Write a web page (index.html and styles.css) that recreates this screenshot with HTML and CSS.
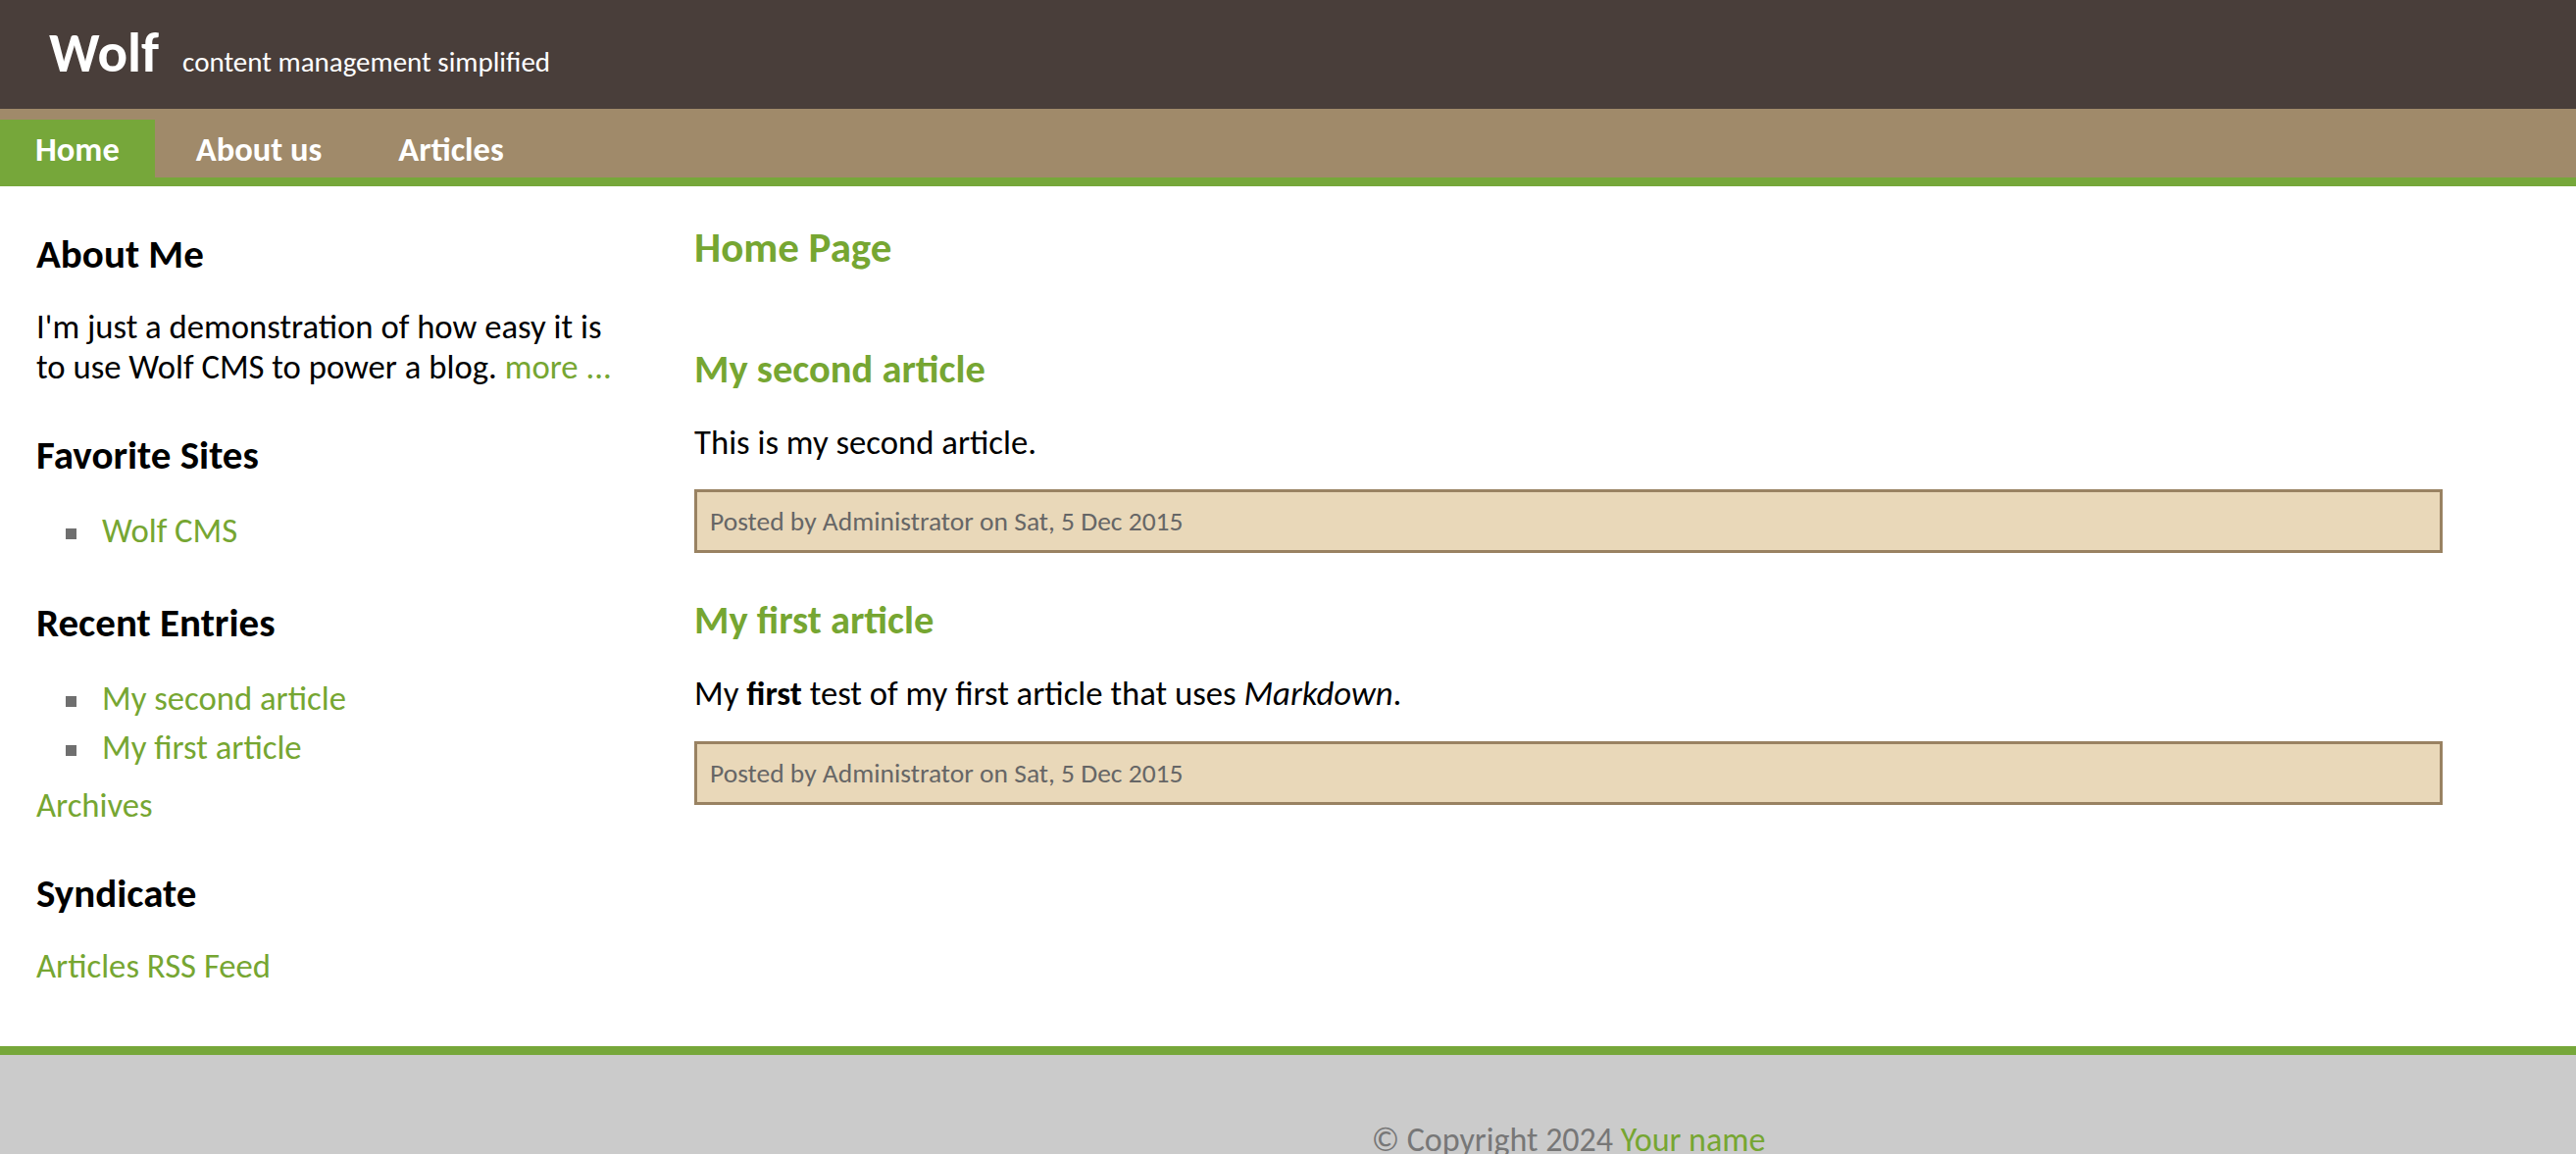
FILE: index.html
```html
<!DOCTYPE html>
<html>
<head>
  <meta charset="utf-8">
  <title>Wolf - Home Page</title>
  <link rel="stylesheet" href="styles.css">
</head>
<body>

  <header class="header">
    <h1 class="logo">Wolf</h1>
    <span class="slogan">content management simplified</span>
  </header>

  <nav class="nav">
    <a href="#" class="nav-item current">Home</a>
    <a href="#" class="nav-item">About us</a>
    <a href="#" class="nav-item">Articles</a>
  </nav>

  <div class="page">

    <div class="sidebar">
      <h3>About Me</h3>
      <p>I'm just a demonstration of how easy it is to use Wolf CMS to power a blog. <a href="#">more ...</a></p>

      <h3>Favorite Sites</h3>
      <ul>
        <li><a href="#">Wolf CMS</a></li>
      </ul>

      <h3>Recent Entries</h3>
      <ul>
        <li><a href="#">My second article</a></li>
        <li><a href="#">My first article</a></li>
      </ul>
      <p class="archives"><a href="#">Archives</a></p>

      <h3>Syndicate</h3>
      <p><a href="#">Articles RSS Feed</a></p>
    </div>

    <div class="content">
      <h2>Home Page</h2>

      <div class="entry">
        <h3><a href="#">My second article</a></h3>
        <p>This is my second article.</p>
        <p class="info">Posted by Administrator on Sat, 5 Dec 2015</p>
      </div>

      <div class="entry">
        <h3><a href="#">My first article</a></h3>
        <p>My <strong>first</strong> test of my first article that uses <em>Markdown</em>.</p>
        <p class="info">Posted by Administrator on Sat, 5 Dec 2015</p>
      </div>
    </div>

  </div>

  <footer class="footer">
    <p>&copy; Copyright 2024 <a href="#">Your name</a></p>
  </footer>

</body>
</html>
```

FILE: styles.css
```css
body {
  margin: 0;
  font-family: Carlito, Calibri, Lato, sans-serif;
  font-size: 34.7px;
  line-height: 41px;
  color: #000;
  background: #fff;
}

a {
  color: #76a632;
  text-decoration: none;
}

/* header */

.header {
  display: flex;
  align-items: baseline;
  box-sizing: border-box;
  height: 111px;
  padding: 25px 50px 0;
  background-color: #493e3a;
  color: #fff;
}

.logo {
  margin: 0 24px 0 0;
  font-size: 57px;
  line-height: 1;
  font-weight: bold;
}

.slogan {
  font-size: 29px;
}

/* navigation */

.nav {
  display: flex;
  gap: 6px;
  padding-top: 11px;
  background-color: #a08a6a;
  border-bottom: 9px solid #76a73a;
}

.nav-item {
  padding: 0 36px;
  font-size: 34.5px;
  line-height: 61px;
  height: 59px;
  font-weight: bold;
  color: #fff;
}

.nav-item.current {
  background-color: #76a73a;
}

/* columns */

.page {
  display: flex;
  padding: 0 136px 61px 37px;
}

.sidebar {
  flex: none;
  width: 595px;
}

.sidebar h3 {
  margin: 45px 0 29px;
  font-size: 41px;
  line-height: 49px;
}

.sidebar p {
  margin: 0;
}

.sidebar ul {
  margin: 0;
  padding: 3px 0 4px 67px;
  list-style: none;
}

.sidebar li + li {
  margin-top: 9px;
}

.sidebar li::before {
  content: "";
  display: inline-block;
  width: 11px;
  height: 11px;
  margin: 0 26px 0 -37px;
  background-color: #6f6f6f;
  vertical-align: middle;
}

.sidebar .archives {
  margin-top: 14px;
}

.content {
  flex: 1;
  margin-left: 76px;
}

.content h2 {
  margin: 37.5px 0 74px;
  font-size: 43px;
  line-height: 50px;
  color: #76a632;
}

.entry {
  margin-top: 44px;
}

.entry h3 {
  margin: 0 0 31px;
  font-size: 40.5px;
  line-height: 48px;
}

.entry p {
  margin: 0 0 27.5px;
}

.entry .info {
  margin: 0;
  padding: 13px 13px;
  font-size: 27.5px;
  line-height: 33px;
  color: #666;
  background-color: #e9d8b9;
  border: 3px solid #998262;
}

/* footer */

.footer {
  background-color: #cbcbcb;
  border-top: 9px solid #76a73a;
  padding: 66px 136px 40px 708px;
  text-align: center;
  font-size: 34px;
  color: #777;
}

.footer p {
  margin: 0;
}
```
